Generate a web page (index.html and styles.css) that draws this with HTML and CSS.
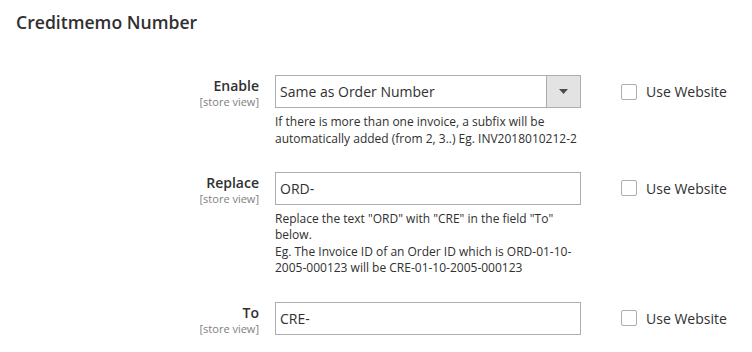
FILE: index.html
```html
<!DOCTYPE html>
<html>
<head>
<meta charset="utf-8">
<link rel="stylesheet" href="styles.css">
</head>
<body>
<div class="section">
  <h2 class="section-title">Creditmemo Number</h2>
  <div class="fields">
    <div class="field">
      <div class="label">
        <span class="label-text">Enable</span>
        <span class="scope">[store view]</span>
      </div>
      <div class="control">
        <div class="select">
          <span class="select-value">Same as Order Number</span>
          <span class="select-btn"><svg width="9" height="5" viewBox="0 0 9 5"><path d="M0 0 H9 L4.5 5 Z" fill="#514943"/></svg></span>
        </div>
        <div class="note">If there is more than one invoice, a subfix will be automatically added (from 2, 3..) Eg. INV2018010212-2</div>
      </div>
      <label class="use-website"><span class="checkbox"></span><span>Use Website</span></label>
    </div>
    <div class="field">
      <div class="label">
        <span class="label-text">Replace</span>
        <span class="scope">[store view]</span>
      </div>
      <div class="control">
        <div class="input">ORD-</div>
        <div class="note">Replace the text "ORD" with "CRE" in the field "To" below.<br>Eg. The Invoice ID of an Order ID which is ORD-01-10-2005-000123 will be CRE-01-10-2005-000123</div>
      </div>
      <label class="use-website"><span class="checkbox"></span><span>Use Website</span></label>
    </div>
    <div class="field">
      <div class="label">
        <span class="label-text">To</span>
        <span class="scope">[store view]</span>
      </div>
      <div class="control">
        <div class="input">CRE-</div>
      </div>
      <label class="use-website"><span class="checkbox"></span><span>Use Website</span></label>
    </div>
  </div>
</div>
</body>
</html>
```

FILE: styles.css
```css
html, body {
  margin: 0;
  padding: 0;
  background: #ffffff;
}
body {
  font-family: "Open Sans", "Liberation Sans", sans-serif;
  color: #303030;
}
.section {
  padding: 0;
}
.section-title {
  margin: 0;
  padding: 11px 0 0 16px;
  font-size: 17.6px;
  line-height: 23px;
  font-weight: 600;
  color: #303030;
}
.fields {
  padding-top: 41px;
}
.field {
  display: flex;
  align-items: flex-start;
  margin-bottom: 24.5px;
}
.label {
  width: 259px;
  flex: none;
  display: flex;
  flex-direction: column;
  align-items: flex-end;
  text-align: right;
  padding-top: 1px;
}
.label-text {
  font-size: 14px;
  font-weight: 600;
  line-height: 19px;
  color: #303030;
}
.scope {
  font-size: 11px;
  line-height: 13px;
  color: #808080;
}
.control {
  width: 306px;
  margin-left: 16px;
  flex: none;
}
.select {
  display: flex;
  height: 33px;
  box-sizing: border-box;
  border: 1px solid #adadad;
  background: #fff;
}
.select-value {
  flex: 1;
  font-size: 14px;
  line-height: 31px;
  padding-left: 4px;
  color: #303030;
}
.select-btn {
  width: 33px;
  border-left: 1px solid #adadad;
  background: #e3e3e3;
  display: flex;
  align-items: center;
  justify-content: center;
}
.input {
  height: 33px;
  box-sizing: border-box;
  border: 1px solid #adadad;
  font-size: 14px;
  line-height: 31px;
  padding-left: 4px;
  color: #303030;
}
.note {
  margin-top: 6px;
  font-size: 12px;
  line-height: 16.6px;
  color: #303030;
}
.use-website {
  display: flex;
  align-items: center;
  margin-left: 40px;
  height: 33px;
  font-size: 14px;
  color: #303030;
}
.checkbox {
  width: 16px;
  height: 16px;
  box-sizing: border-box;
  border: 1px solid #adadad;
  border-radius: 2px;
  background: #fff;
  margin-right: 9px;
}
```
